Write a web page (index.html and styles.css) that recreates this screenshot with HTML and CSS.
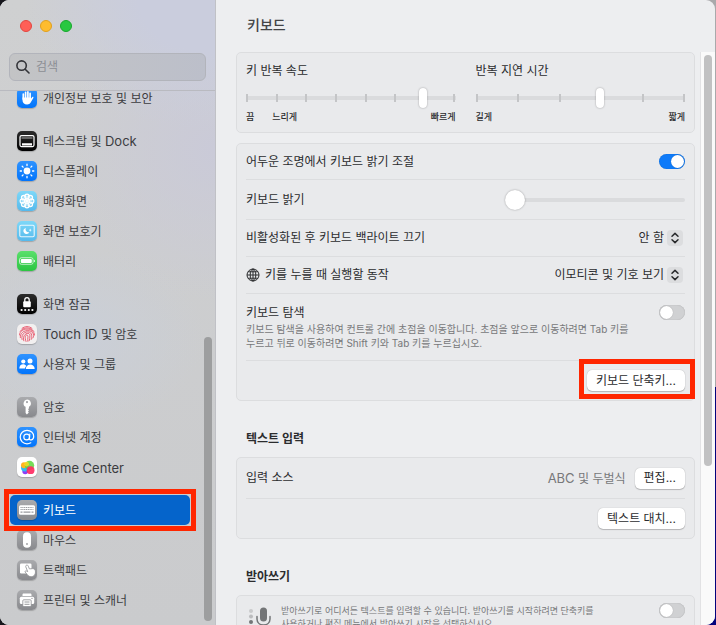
FILE: index.html
```
<!DOCTYPE html>
<html lang="ko">
<head>
  <meta charset="UTF-8">
  <title>키보드</title>
  <link rel="stylesheet" href="styles.css">
</head>
<body>

  <div class="window">
    <aside class="sidebar">
      <div class="sidebar-top">
        <div class="lights">
          <button class="light red" aria-label="닫기"></button>
          <button class="light yellow" aria-label="최소화"></button>
          <button class="light green" aria-label="확대"></button>
        </div>
        <label class="search">
          <svg width="14" height="14" viewBox="0 0 14 14" fill="none" stroke="#333438" stroke-width="1.6" stroke-linecap="round"><circle cx="5.6" cy="5.6" r="4.7"/><path d="M9.2 9.2L13 13"/></svg>
          <input type="text" placeholder="검색" aria-label="검색">
        </label>
      </div>

      <nav class="menu">
        <div class="group">
          <a href="#privacy" class="item">
            <svg class="icon blue" viewBox="0 0 20 20"><path d="M6.3 6v5M8.6 4.3v6M10.9 3.9v6M13.1 5.4v6" stroke="#fff" stroke-width="1.7" stroke-linecap="round"/><path d="M5.5 9.5h8.4v1.2l1.2-1.5c.8-.8 1.7-.1 1.2.8l-2.6 4.6c-.7 1.3-1.9 2-3.6 2-3 0-4.6-1.8-4.6-4.6z" fill="#fff"/></svg>
            <span>개인정보 보호 및 보안</span>
          </a>
        </div>
        <div class="group">
          <a href="#dock" class="item">
            <svg class="icon black" viewBox="0 0 20 20"><rect x="3" y="4.6" width="14" height="11" rx="1.5" fill="none" stroke="#fff" stroke-width="1.2"/><path d="M4.5 7h11" stroke="#aaa"/><path d="M5 12.2h10v2.2H5z" fill="#fff"/></svg>
            <span>데스크탑 및 <span class="latin">Dock</span></span>
          </a>
          <a href="#display" class="item">
            <svg class="icon blue" viewBox="0 0 20 20"><circle cx="10" cy="10" r="3.4" fill="#fff"/><path d="M10 3.2v1.3M10 15.5v1.3M3.2 10h1.3M15.5 10h1.3M5.2 5.2l.9.9M13.9 13.9l.9.9M5.2 14.8l.9-.9M13.9 6.1l.9-.9" stroke="#fff" stroke-width="1.3" stroke-linecap="round"/></svg>
            <span>디스플레이</span>
          </a>
          <a href="#wallpaper" class="item">
            <svg class="icon cyan" viewBox="0 0 20 20"><g fill="#fff" fill-opacity=".3" stroke="#fff" stroke-width="1.1"><circle cx="10" cy="5.4" r="2.3"/><circle cx="13.3" cy="6.7" r="2.3"/><circle cx="14.6" cy="10" r="2.3"/><circle cx="13.3" cy="13.3" r="2.3"/><circle cx="10" cy="14.6" r="2.3"/><circle cx="6.7" cy="13.3" r="2.3"/><circle cx="5.4" cy="10" r="2.3"/><circle cx="6.7" cy="6.7" r="2.3"/></g><circle cx="10" cy="10" r="2" fill="#fff"/></svg>
            <span>배경화면</span>
          </a>
          <a href="#screensaver" class="item">
            <svg class="icon cyan" viewBox="0 0 20 20"><rect x="2.8" y="4.3" width="14.4" height="11.4" rx="1.2" fill="none" stroke="#fff" stroke-opacity=".85" stroke-width="1.1"/><path d="M8.9 6.9a3.1 3.1 0 1 0 3.4 4.3 3 3 0 0 1-3.4-4.3z" fill="#fff"/><path d="M13.2 7.6l.5 1.1 1.1.4-1.1.5-.5 1.1-.5-1.1-1.1-.5 1.1-.4z" fill="#fff"/></svg>
            <span>화면 보호기</span>
          </a>
          <a href="#battery" class="item">
            <svg class="icon lime" viewBox="0 0 20 20"><rect x="2.5" y="6.7" width="13.6" height="6.6" rx="2" fill="none" stroke="#fff" stroke-opacity=".75" stroke-width=".9"/><rect x="3.8" y="7.9" width="11" height="4.2" rx="1" fill="#fff"/><path d="M17 8.8c1.2.4 1.2 2 0 2.4z" fill="#fff"/></svg>
            <span>배터리</span>
          </a>
        </div>
        <div class="group">
          <a href="#lock" class="item">
            <svg class="icon black" viewBox="0 0 20 20"><path d="M7.8 8V5.8c0-3 4.4-3 4.4 0V8" fill="none" stroke="#fff" stroke-width="1.3"/><rect x="6.2" y="7.3" width="7.6" height="6" rx="1" fill="#fff"/><g fill="#fff"><circle cx="4.6" cy="16" r="1.1"/><circle cx="8.2" cy="16" r="1.1"/><circle cx="11.8" cy="16" r="1.1"/><circle cx="15.4" cy="16" r="1.1"/></g></svg>
            <span>화면 잠금</span>
          </a>
          <a href="#touchid" class="item">
            <svg class="icon light-bg" viewBox="0 0 20 20" fill="none" stroke="#e8536a" stroke-width=".9" stroke-linecap="round"><path d="M5 4.4c3-2.5 7-2.5 10 0M3.2 7.4c3-4.8 10.6-4.8 13.6 0M2.5 11c0-8 15-8 15 0M3.3 13.6C2.5 5 16.5 4.2 16.6 11.5c0 1-.2 1.8-.7 2.5M5 15.5C3 7 14.6 5.5 14.7 11.5c0 1.6.2 2.6-.5 4M6.8 16.8C4.6 9.5 12.8 7.2 12.9 11.5c.1 2-.1 3.7-.7 5.3M9 17.5c-2-5.5.5-7.5 1.6-6.2.8 1-.2 3.6.2 6"/></svg>
            <span><span class="latin">Touch ID</span> 및 암호</span>
          </a>
          <a href="#users" class="item">
            <svg class="icon blue" viewBox="0 0 20 20" fill="#fff"><circle cx="6.3" cy="7.5" r="2.1"/><path d="M2.3 14.6c0-5.4 5.5-5.4 7-2.6-.8.7-1.3 1.6-1.4 2.6z"/><circle cx="13" cy="7" r="2.5"/><path d="M8.8 15c0-6 8.9-6 8.9 0z"/></svg>
            <span>사용자 및 그룹</span>
          </a>
        </div>
        <div class="group">
          <a href="#passwords" class="item">
            <svg class="icon gray" viewBox="0 0 20 20"><path fill="#fff" fill-rule="evenodd" d="M10 2.5a3.9 3.9 0 0 1 1.9 7.3l.1 1.4-1 1 1 1-1 1.2.8 1-1.9 2-1.3-1.3V9.8A3.9 3.9 0 0 1 10 2.5zM10 4a1.1 1.1 0 1 0 0 2.2A1.1 1.1 0 0 0 10 4z"/></svg>
            <span>암호</span>
          </a>
          <a href="#accounts" class="item">
            <svg class="icon blue" viewBox="0 0 20 20" fill="none" stroke="#fff" stroke-width="1.2" stroke-linecap="round"><circle cx="9.7" cy="10" r="2.9"/><path d="M12.8 7.2l-.5 4.3c-.1 2.3 4.4 2 4.4-2C16.7 5.7 13.7 3.3 10 3.3S3.2 6.2 3.2 10s3 6.8 6.8 6.8c1.500 0 2.800-.4 3.800-1"/></svg>
            <span>인터넷 계정</span>
          </a>
          <a href="#gamecenter" class="item">
            <svg class="icon white" viewBox="0 0 20 20"><circle cx="8.2" cy="14.5" r="2.8" fill="#8e3df5"/><circle cx="8" cy="10.5" r="4" fill="#2fb8f5"/><circle cx="7" cy="8.2" r="3" fill="#ffb422"/><circle cx="12.5" cy="8.5" r="4.7" fill="#5ed63c" fill-opacity=".85"/><circle cx="9.6" cy="7.2" r="2.4" fill="#ffd91f" fill-opacity=".8"/><circle cx="13.6" cy="13.2" r="3.9" fill="#ff2d63" fill-opacity=".92"/></svg>
            <span class="latin">Game Center</span>
          </a>
        </div>
        <div class="group">
          <a href="#keyboard" class="item selected" aria-current="page">
            <svg class="icon gray" viewBox="0 0 20 20"><rect x="2" y="5.3" width="16" height="9.4" rx="1.5" fill="#fff"/><path d="M3.5 7.5h13M3.5 9.5h13" stroke="#999a9e" stroke-width="1.2" stroke-dasharray="1.2 .6"/><path d="M3.5 12.2h2M6.5 12.2h7M14.5 12.2h2" stroke="#999a9e" stroke-width="1.2"/></svg>
            <span>키보드</span>
          </a>
          <a href="#mouse" class="item">
            <svg class="icon gray" viewBox="0 0 20 20"><rect x="6" y="2.3" width="8" height="15.4" rx="4" fill="#fff"/><circle cx="10" cy="14" r=".9" fill="#9a9b9f"/></svg>
            <span>마우스</span>
          </a>
          <a href="#trackpad" class="item">
            <svg class="icon gray" viewBox="0 0 20 20"><rect x="3" y="3.5" width="11.5" height="10" rx="1.3" fill="#fff"/><path d="M9.5 5.2c.9-.4 1.5.2 1.8 1l1.1 2.7 3.3-.3c1.7 0 2.8 1.4 2.8 3.4 0 3-1.9 4.7-4.3 4.7-1.8 0-3-.8-4-2.2l-2-2.4c-.5-.9.3-1.5 1.3-1.1l1.2.6-1.9-4.7c-.3-.8 0-1.4.7-1.7z" fill="#fff" stroke="#8d8e92" stroke-width=".8"/></svg>
            <span>트랙패드</span>
          </a>
          <a href="#printers" class="item">
            <svg class="icon gray" viewBox="0 0 20 20"><path d="M5.5 6V4.8c0-.8.5-1.3 1.3-1.3h6.4c.8 0 1.3.5 1.3 1.3V6z" fill="#fff"/><rect x="2.8" y="6.7" width="14.4" height="7.3" rx="1.6" fill="#fff"/><rect x="5.8" y="9.8" width="8.4" height="6.8" rx="1" fill="#fff" stroke="#8d8e92" stroke-width=".8"/><path d="M7.5 12h5M7.5 14.3h5" stroke="#8d8e92" stroke-width=".9"/><circle cx="15" cy="8.4" r=".6" fill="#8d8e92"/></svg>
            <span>프린터 및 스캐너</span>
          </a>
        </div>
      </nav>
      <div class="sidebar-thumb"></div>
    </aside>

    <main class="main">
      <h1>키보드</h1>
      <div class="scroller">
        <div class="content">
          <section class="card repeat">
            <div class="tuner">
              <label for="rate">키 반복 속도</label>
              <div class="ticked">
                <div class="ticks"><i></i><i></i><i></i><i></i><i></i><i></i><i></i><i></i></div>
                <input type="range" id="rate" min="0" max="7" value="6">
              </div>
              <div class="scale"><span>끔</span><span class="slow">느리게</span><span>빠르게</span></div>
            </div>
            <div class="tuner">
              <label for="delay">반복 지연 시간</label>
              <div class="ticked">
                <div class="ticks"><i></i><i></i><i></i><i></i><i></i><i></i></div>
                <input type="range" id="delay" min="0" max="5" value="3">
              </div>
              <div class="scale"><span>길게</span><span>짧게</span></div>
            </div>
          </section>

          <section class="card">
            <div class="row">
              <label for="ambient">어두운 조명에서 키보드 밝기 조절</label>
              <input type="checkbox" class="switch" id="ambient" checked>
            </div>
            <div class="row tall">
              <label for="brightness">키보드 밝기</label>
              <input type="range" class="brightness" id="brightness" value="0">
            </div>
            <div class="row">
              <label for="backlight">비활성화된 후 키보드 백라이트 끄기</label>
              <div class="popup">
                <select id="backlight"><option>안 함</option></select>
                <svg viewBox="0 0 16 16"><path d="M5 6.3L8 3.4l3 2.9M5 9.7l3 2.900 3-2.900"/></svg>
              </div>
            </div>
            <div class="row">
              <label for="globe">
                <svg class="globe" viewBox="0 0 14 14"><circle cx="7" cy="7" r="6"/><ellipse cx="7" cy="7" rx="2.8" ry="6"/><path d="M7 1v12M1 7h12M2 3.8h10M2 10.2h10"/></svg>키를 누를 때 실행할 동작
              </label>
              <div class="popup">
                <select id="globe"><option>이모티콘 및 기호 보기</option></select>
                <svg viewBox="0 0 16 16"><path d="M5 6.3L8 3.4l3 2.9M5 9.7l3 2.900 3-2.900"/></svg>
              </div>
            </div>
            <div class="row navigation">
              <div>
                <label for="navigation">키보드 탐색</label>
                <p>키보드 탐색을 사용하여 컨트롤 간에 초점을 이동합니다. 초점을 앞으로 이동하려면 Tab 키를<br>누르고 뒤로 이동하려면 Shift 키와 Tab 키를 누르십시오.</p>
              </div>
              <input type="checkbox" class="switch" id="navigation">
            </div>
            <div class="row tall end">
              <div class="marked"><button class="btn">키보드 단축키...</button></div>
            </div>
          </section>

          <h2>텍스트 입력</h2>
          <section class="card">
            <div class="row tall">
              <span>입력 소스</span>
              <div class="source"><span><span class="latin">ABC</span> 및 두벌식</span><button class="btn">편집...</button></div>
            </div>
            <div class="row tall end">
              <button class="btn">텍스트 대치...</button>
            </div>
          </section>

          <h2>받아쓰기</h2>
          <section class="card">
            <div class="row dictation">
              <svg class="mic" viewBox="0 0 24 26"><circle cx="3" cy="5" r="2" fill="#c9cacc"/><circle cx="3" cy="10.5" r="2" fill="#bbbcbe"/><circle cx="3" cy="16" r="2" fill="#737577"/><rect x="12" y="1.5" width="7" height="14" rx="3.5" fill="#737577"/><path d="M9 10.5v2.500c0 8 13 8 13 0v-2.500M15.500 19v4" fill="none" stroke="#737577" stroke-width="1.5" stroke-linecap="round"/></svg>
              <label for="dictation">받아쓰기로 어디서든 텍스트를 입력할 수 있습니다. 받아쓰기를 시작하려면 단축키를<br>사용하거나 편집 메뉴에서 받아쓰기 시작을 선택하십시오.</label>
              <input type="checkbox" class="switch" id="dictation">
            </div>
          </section>
        </div>
        <div class="track"><div class="thumb"></div></div>
      </div>
    </main>
  </div>

</body>
</html>
```
FILE: styles.css
```
* { box-sizing: border-box; }
body {
  margin: 0;
  background: linear-gradient(#a9a9ab 62%, #03037c 62%);
  font-family: Inter, "Noto Sans CJK KR", sans-serif;
  font-size: 12px;
  line-height: 16px;
  color: #2b2c2e;
}
button, input, select { font: inherit; color: inherit; margin: 0; }
.latin { font-size: 13px; }

.window {
  display: flex;
  height: 100vh;
  margin-right: 1px;
  overflow: hidden;
  border-radius: 9px;
  background: #edeef0;
  box-shadow: -8px 0 0 #17171c;
}

/* sidebar */
.sidebar {
  position: relative;
  display: flex;
  flex-direction: column;
  flex: 0 0 216px;
  min-width: 0;
  border-right: 1px solid #c0c1c6;
  background:
    radial-gradient(ellipse 190px 130px at 100% 0, #cacddd 40%, transparent),
    radial-gradient(ellipse 150px 150px at 100% 24%, #cacad8, transparent),
    radial-gradient(ellipse 130px 90px at 35% 54%, #cacfd8, transparent),
    linear-gradient(#cfd0d1, #cacbcd);
}
.sidebar-top {
  flex: none;
  padding: 20px 9px 9px;
  border-bottom: 1px solid #b9bac0;
}
.lights {
  display: flex;
  gap: 8px;
  padding-left: 11px;
  margin-bottom: 21px;
}
.light {
  width: 12px;
  height: 12px;
  padding: 0;
  border: 1px solid;
  border-radius: 50%;
}
.red { background: #ff5f57; border-color: #e2463f; }
.yellow { background: #febc2e; border-color: #e0a01e; }
.green { background: #28c840; border-color: #17a82c; }
.search {
  display: flex;
  align-items: center;
  gap: 6px;
  height: 28px;
  padding: 0 6px;
  border: 1px solid #b2b4bb;
  border-radius: 6px;
  background: linear-gradient(100deg, #c3c4c5, #bcbfca);
}
.search input {
  flex: 1;
  min-width: 0;
  padding: 0;
  border: 0;
  outline: 0;
  background: none;
}
.search input::placeholder { color: #8c8e94; }

.menu {
  flex: 1;
  min-height: 0;
  overflow: hidden;
  padding: 0 25px 0 10px;
}
.group { margin-bottom: 13px; }
/* list is scrolled a little under the header */
.group:first-child { margin-top: -8px; }
.item {
  position: relative;
  display: flex;
  align-items: center;
  gap: 6px;
  height: 30px;
  padding: 0 7px;
  border-radius: 5px;
  color: #3b3c3f;
  text-decoration: none;
  white-space: nowrap;
}
.item > span { padding-top: 1px; }
.selected { background: #0564cb; color: #fff; }
.selected::after {
  content: "";
  position: absolute;
  inset: -6px;
  border: 5px solid #ff2600;
  z-index: 1;
}
.icon {
  flex: none;
  width: 20px;
  height: 20px;
  border-radius: 5px;
  box-shadow: 0 1px 1px rgba(0, 0, 0, .2);
}
.blue { background: linear-gradient(#2f93ff, #0274fb); }
.black { background: linear-gradient(#2c2c2c, #000); }
.cyan { background: linear-gradient(#7ed8f8, #55b9ec); }
.lime { background: linear-gradient(#5be06c, #2cc542); }
.gray { background: linear-gradient(#aaabae, #88898d); }
.light-bg { background: #f2f0f0; }
.white { background: #fff; }
.sidebar-thumb {
  position: absolute;
  right: 3px;
  bottom: 4px;
  width: 8px;
  height: 284px;
  border-radius: 4px;
  background: #9d9e9f;
}

/* right pane */
.main {
  display: flex;
  flex-direction: column;
  flex: 1;
  min-width: 0;
}
h1 {
  flex: none;
  height: 52px;
  margin: 0;
  padding-left: 31px;
  font-size: 14px;
  font-weight: 500;
  line-height: 50px;
  color: #434446;
}
.scroller {
  display: flex;
  flex: 1;
  min-height: 0;
}
.content {
  flex: 1;
  min-width: 0;
  overflow: hidden;
  padding: 0 5px 0 20px;
}
.track {
  width: 15px;
  border-left: 1px solid #e2e2e4;
  background: #fafafa;
}
.thumb {
  height: 411px;
  margin: 3px;
  width: 8px;
  border-radius: 4px;
  background: #c1c1c2;
}
.card {
  margin-bottom: 10px;
  padding: 0 9px;
  border: 1px solid #dcdddf;
  border-radius: 5px;
  background: #e9eaec;
}
h2 {
  margin: 29px 0 9px;
  padding-left: 10px;
  font-size: 12px;
  font-weight: 700;
  line-height: 18px;
}

.repeat {
  display: grid;
  grid-template-columns: 1fr 1fr;
  gap: 20px;
  padding: 10px 9px 8px;
}
.tuner label { display: block; }
.ticked {
  display: grid;
  align-items: center;
  height: 20px;
  margin: 9px 0 2px;
}
.ticked > * { grid-area: 1 / 1; }
.ticks {
  display: flex;
  justify-content: space-between;
  align-items: center;
  height: 4px;
  background: #dadbdd;
}
.ticks i {
  width: 2px;
  height: 8px;
  background: #c4c5c7;
}
.scale {
  display: flex;
  justify-content: space-between;
  font-size: 9px;
  font-weight: 500;
  line-height: 14px;
}
.slow { margin: 0 auto 0 18px; }

input[type=range] {
  appearance: none;
  width: 100%;
  height: 20px;
  background: none;
}
input[type=range]::-webkit-slider-thumb {
  appearance: none;
  width: 8px;
  height: 20px;
  border-radius: 4px;
  background: #fff;
  box-shadow: 0 0 2px rgba(0, 0, 0, .35);
}
input.brightness {
  width: 180px;
}
input.brightness::-webkit-slider-runnable-track {
  height: 4px;
  border-radius: 2px;
  background: #dadbdd;
}
input.brightness::-webkit-slider-thumb {
  width: 20px;
  margin-top: -8px;
  border-radius: 50%;
}

.row {
  display: flex;
  align-items: center;
  justify-content: space-between;
  height: 37px;
}
.row:first-child { height: 35px; }
.row + .row { border-top: 1px solid #dcdddf; }
.tall, .tall:first-child { height: 40px; }
.end { justify-content: flex-end; }
.navigation {
  align-items: flex-start;
  height: 67px;
  padding-top: 11px;
}
.navigation label { display: block; }
.navigation p {
  margin: 1px 0 0;
  font-size: 10px;
  line-height: 14px;
  white-space: nowrap;
  color: #77787a;
}
.globe {
  width: 14px;
  height: 14px;
  margin-right: 5px;
  vertical-align: -3px;
  fill: none;
  stroke: #2b2c2e;
  stroke-width: 1;
}

.switch {
  appearance: none;
  flex: none;
  width: 26px;
  height: 15px;
  border-radius: 8px;
  background: #d0d1d3;
  box-shadow: inset 0 0 1px rgba(0, 0, 0, .3);
}
.switch::before {
  content: "";
  display: block;
  width: 13px;
  height: 13px;
  margin: 1px;
  border-radius: 50%;
  background: #fff;
  box-shadow: 0 0 1px rgba(0, 0, 0, .3);
}
.switch:checked { background: #0f7bf9; }
.switch:checked::before { margin-left: 12px; }

.popup {
  display: grid;
  align-items: center;
  padding-right: 2px;
}
.popup > * { grid-area: 1 / 1; }
.popup select {
  appearance: none;
  width: 160px;
  padding: 0 19px 0 0;
  border: 0;
  background: none;
  text-align: right;
  text-align-last: right;
}
.popup svg {
  justify-self: end;
  width: 16px;
  height: 16px;
  border-radius: 4px;
  background: #dcdddf;
  fill: none;
  stroke: #2b2c2e;
  stroke-width: 1.5;
  stroke-linecap: round;
  stroke-linejoin: round;
  pointer-events: none;
}

.btn {
  height: 21px;
  padding: 0 9px;
  border: 0;
  border-radius: 5px;
  background: #fff;
  line-height: 20px;
  box-shadow: 0 0 1px rgba(0, 0, 0, .3), 0 1px 1px rgba(0, 0, 0, .2);
}
.marked { position: relative; }
.marked::after {
  content: "";
  position: absolute;
  inset: -11px -10px -8px -8px;
  border: 5px solid #ff2600;
  pointer-events: none;
}
.source {
  display: flex;
  align-items: center;
  gap: 9px;
  color: #77787a;
}
.source .btn { color: #2b2c2e; }

.row.dictation {
  align-items: flex-start;
  height: 60px;
  padding-top: 7px;
}
.dictation label {
  flex: 1;
  padding-top: 1px;
  font-size: 9px;
  line-height: 13px;
  white-space: nowrap;
  color: #77787a;
}
.mic {
  width: 24px;
  height: 26px;
  margin: 3px 9px 0 2px;
}
```
